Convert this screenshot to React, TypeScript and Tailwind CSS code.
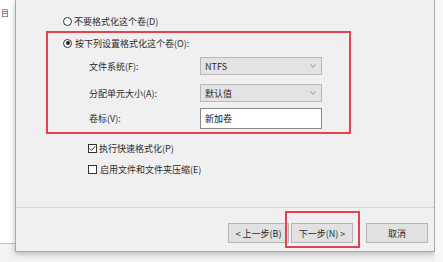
const Radio = ({ checked }: { checked?: boolean }) => (
  <span className="flex h-[9px] w-[9px] items-center justify-center rounded-full border border-[#333] bg-white">
    {checked && <span className="h-[4px] w-[4px] rounded-full bg-[#222]" />}
  </span>
)

const Check = ({ checked }: { checked?: boolean }) => (
  <span className="flex h-[9px] w-[9px] items-center justify-center border border-[#333] bg-white">
    {checked && (
      <svg width="7" height="7" viewBox="0 0 7 7">
        <polyline points="0.8,3.6 2.6,5.4 6.2,1.2" fill="none" stroke="#222" strokeWidth="0.9" />
      </svg>
    )}
  </span>
)

const Select = ({ value }: { value: string }) => (
  <div className="flex h-[18px] w-[122px] items-center justify-between border border-[#b9b9b9] bg-[#e3e3e3] pl-[4px] pr-[5px]">
    <span>{value}</span>
    <svg width="6" height="4" viewBox="0 0 6 4">
      <polyline points="0.5,0.5 3,3.2 5.5,0.5" fill="none" stroke="#777" strokeWidth="0.8" />
    </svg>
  </div>
)

const Row = ({ label, children, className }: { label: string; children: React.ReactNode; className: string }) => (
  <div className={`ml-[41px] flex items-center ${className}`}>
    <span className="w-[111px]">{label}</span>
    {children}
  </div>
)

export default function App() {
  return (
    <div className="flex h-[262px] w-[443px] overflow-hidden bg-[#f3f3f3] font-['Noto_Sans_CJK_SC',sans-serif] text-[9px] leading-none text-[#2a2a2a]">
      {/* ventana de atras */}
      <div className="flex w-[15px] flex-col">
        <div className="h-[243px] bg-white pl-[1px] pt-[9px] text-[8px] text-[#444]">
          <span>目</span>
        </div>
        <div className="border-t border-[#c4c4c4]" />
      </div>

      {/* dialogo */}
      <div className="flex h-[252px] w-[420px] flex-col border-x border-b border-[#a9a9a9] bg-[#f0f0f0] shadow-[0_2px_6px_rgba(0,0,0,0.25)]">
        <div className="flex-1">
          <div className="ml-[47px] mt-[13px] flex h-[16px] items-center gap-[2px]">
            <Radio />
            <span>不要格式化这个卷(D)</span>
          </div>

          <div className="ml-[30px] mt-[2px] h-[103px] w-[305px] border-2 border-[#e4424f]">
            <div className="ml-[15px] mt-[2px] flex h-[16px] items-center gap-[3px]">
              <Radio checked />
              <span>按下列设置格式化这个卷(O):</span>
            </div>
            <Row label="文件系统(F):" className="mt-[6px]">
              <Select value="NTFS" />
            </Row>
            <Row label="分配单元大小(A):" className="mt-[9px]">
              <Select value="默认值" />
            </Row>
            <Row label="卷标(V):" className="mt-[6px]">
              <div className="flex h-[21px] w-[122px] items-center border border-[#8a8a8a] bg-white pl-[4px] text-[#111]">新加卷</div>
            </Row>
          </div>

          <div className="ml-[72px] mt-[6px] flex h-[17px] items-center gap-[2px]">
            <Check checked />
            <span>执行快速格式化(P)</span>
          </div>
          <div className="ml-[72px] mt-[4px] flex h-[17px] items-center gap-[3px]">
            <Check />
            <span>启用文件和文件夹压缩(E)</span>
          </div>
        </div>

        <div className="relative h-[44px] border-t border-[#d6d6d6] pl-[212px] pt-[15px]">
          <div className="flex">
            <button className="flex h-[20px] w-[61px] items-center justify-center border border-[#b5b5b5] bg-[#e1e1e1]">&lt; 上一步(B)</button>
            <button className="ml-[2px] flex h-[20px] w-[62px] items-center justify-center border border-[#b5b5b5] bg-[#e1e1e1]">下一步(N) &gt;</button>
            <button className="ml-[13px] flex h-[20px] w-[62px] items-center justify-center border border-[#b5b5b5] bg-[#e1e1e1]">取消</button>
          </div>
          <div className="absolute left-[269px] top-[3px] h-[37px] w-[75px] border-2 border-[#e4424f]" />
        </div>
      </div>

      <div className="flex-1 bg-[#f7f7f7]" />
    </div>
  )
}
